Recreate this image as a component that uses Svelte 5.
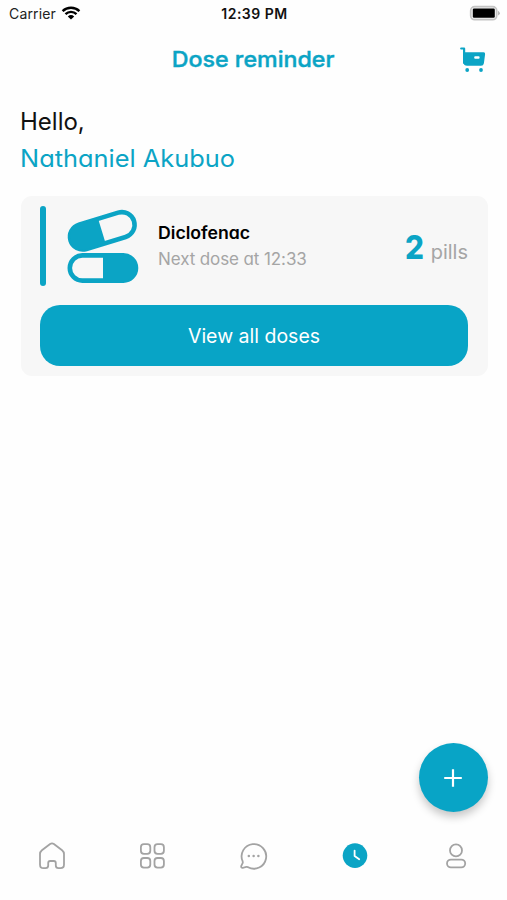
<script>
  const tabs = ['home', 'apps', 'chat', 'doses', 'profile'];
</script>

<div class="screen">
  <div class="status">
    <div class="carrier">
      <span>Carrier</span>
      <svg width="20" height="14" viewBox="0 0 20 14">
        <path d="M1.6 5.2a12 12 0 0 1 16.8 0M4.5 8.1a7.9 7.9 0 0 1 11 0" fill="none" stroke="#000" stroke-width="2.4" />
        <path d="M6.8 10.4a4.7 4.7 0 0 1 6.4 0L10 13.6z" fill="#000" />
      </svg>
    </div>
    <div class="time">12:39 PM</div>
    <svg class="battery" width="32" height="16" viewBox="0 0 32 16">
      <rect x="1.7" y="1.7" width="26" height="13" rx="4" fill="#f4f4f4" stroke="#c4c4c4" stroke-width="1.7" />
      <rect x="3.8" y="3.6" width="22" height="9.2" rx="1.2" fill="#000" />
      <path d="M29.2 5.8q3 2.4 0 4.8z" fill="#aaa" />
    </svg>
  </div>

  <header>
    <h1>Dose reminder</h1>
    <svg class="cart" width="28" height="28" viewBox="0 0 28 28">
      <path d="M2.2 2.5H5.1V17" fill="none" stroke="#0ba4c5" stroke-width="2.2" stroke-linecap="round" stroke-linejoin="round" />
      <path d="M4.6 6.3H24.6Q26.4 6.3 26.1 8.2L24.9 17.2Q24.5 19.8 22 19.8H8.1Q4.6 19.8 4.6 16.5z" fill="#0ba4c5" />
      <rect x="15.2" y="10.3" width="5.4" height="2.4" rx="1" fill="#fff" />
      <circle cx="8.2" cy="24" r="1.9" fill="#0ba4c5" />
      <circle cx="22" cy="24" r="1.9" fill="#0ba4c5" />
    </svg>
  </header>

  <section class="greeting">
    <div class="hello">Hello,</div>
    <div class="name">Nathaniel Akubuo</div>
  </section>

  <section class="card">
    <div class="dose">
      <div class="bar"></div>
      <svg class="pills" width="74" height="78" viewBox="0 0 74 78">
        <g transform="translate(36.3 23.8) rotate(-17)">
          <rect x="-33.2" y="-12.7" width="66.4" height="25.4" rx="12.7" fill="#f7f7f7" stroke="#0ba4c5" stroke-width="4.6" />
          <path d="M-.5-12.7V12.7H-20.5A12.7 12.7 0 0 1-20.5-12.7z" fill="#0ba4c5" />
        </g>
        <rect x="3.8" y="48.4" width="66.2" height="25.2" rx="12.6" fill="#f7f7f7" stroke="#0ba4c5" stroke-width="4.6" />
        <path d="M37 48.4V73.6H57.5A12.6 12.6 0 0 0 57.5 48.4z" fill="#0ba4c5" />
      </svg>
      <div class="info">
        <div class="drug">Diclofenac</div>
        <div class="next">Next dose at 12:33</div>
      </div>
      <div class="count"><b>2</b><span>pills</span></div>
    </div>
    <button class="all">View all doses</button>
  </section>

  <div class="fab-row">
    <button class="fab" aria-label="Add dose">
      <svg width="20" height="20" viewBox="0 0 20 20"><path d="M10 1.2V18.8M1.2 10H18.8" stroke="#fff" stroke-width="2.2" /></svg>
    </button>
  </div>

  <nav>
    {#each tabs as tab}
      <div class="tab">
        <svg width="30" height="30" viewBox="0 0 30 30" fill="none" stroke="#a3a3a3" stroke-width="1.8" stroke-linejoin="round">
          {#if tab === 'home'}
            <path d="M13.1 3Q15 1.7 16.9 3L25.1 9.2Q27 10.7 27 13V23.5Q27 27.2 23.5 27.2H21.5Q18.8 27.2 18.8 24.5V22Q18.8 20 16.8 20H13.2Q11.2 20 11.2 22V24.5Q11.2 27.2 8.5 27.2H6.5Q3 27.2 3 23.5V13Q3 10.7 4.9 9.2z" />
          {:else if tab === 'apps'}
            <rect x="2.9" y="3.2" width="9.4" height="9.6" rx="3" />
            <rect x="16.5" y="3.2" width="9.4" height="9.6" rx="3" />
            <rect x="2.9" y="17" width="9.4" height="9.6" rx="3" />
            <rect x="16.5" y="17" width="9.4" height="9.6" rx="3" />
          {:else if tab === 'chat'}
            <path d="M3.6 20.2A12.3 12.3 0 1 1 9.1 26.2Q7.3 25.6 5.4 26.3L3.7 26.8Q2 27 2.2 25.2L3.4 22.5Q4.1 21.5 3.6 20.2z" />
            <g fill="#a3a3a3" stroke="none">
              <circle cx="9.8" cy="15" r="1.25" /><circle cx="14.6" cy="15" r="1.25" /><circle cx="19.4" cy="15" r="1.25" />
            </g>
          {:else if tab === 'doses'}
            <circle cx="15" cy="14.6" r="12.3" fill="#0ba4c5" stroke="none" />
            <path d="M14.6 9.6V15L19.2 18.2" stroke="#fff" stroke-width="1.8" stroke-linecap="round" />
          {:else}
            <circle cx="15" cy="9.4" r="6" />
            <rect x="6" y="18.6" width="18.2" height="7.8" rx="3.9" />
          {/if}
        </svg>
      </div>
    {/each}
  </nav>
</div>

<style>
  :global(body) { background: #fff; }
  .screen {
    width: 507px; height: 900px; box-sizing: border-box; overflow: hidden;
    display: flex; flex-direction: column; background: #fefefe; color: #111;
    font-family: Inter, "Liberation Sans", sans-serif;
    font-feature-settings: "cv11";
  }
  .status {
    height: 28px; flex: none; display: grid; grid-template-columns: 1fr auto 1fr;
    align-items: center; padding: 0 6px 0 9px; font-feature-settings: normal;
  }
  .carrier { display: flex; align-items: center; gap: 5px; font-size: 14px; color: #222; letter-spacing: .15px; margin-top: -1px; }
  .carrier svg { margin-top: -2px; }
  .time { font-size: 14px; font-weight: 600; letter-spacing: .5px; padding-right: 1px; margin-top: -1px; }
  .battery { justify-self: end; margin-top: -2px; }
  header { height: 64px; flex: none; display: grid; grid-template-columns: 1fr auto 1fr; align-items: center; }
  h1 {
    grid-column: 2; margin: -2px 0 0; font-size: 22px; font-weight: 500; color: #0ba4c5;
    transform: scaleX(1.055); white-space: nowrap; -webkit-text-stroke: .4px #0ba4c5;
  }
  .cart { justify-self: end; margin-right: 20px; }
  .greeting { box-sizing: border-box; height: 104px; flex: none; padding: 12px 20px 0; font-size: 24px; line-height: 36.5px; white-space: nowrap; }
  .name { color: #0ba4c5; transform: scaleX(1.058); transform-origin: left; }
  .card { width: 467px; height: 180px; flex: none; box-sizing: border-box; margin-left: 21px; padding: 10px 20px 10px 19px; border-radius: 11px; background: #f7f7f7; }
  .dose { height: 80px; display: flex; align-items: center; }
  .bar { width: 6px; height: 80px; border-radius: 3px; background: #0ba4c5; }
  .pills { margin-left: 20px; flex: none; }
  .info { margin-left: 18px; white-space: nowrap; line-height: 26px; }
  .drug { font-size: 17px; font-weight: 600; color: #000; transform: scaleX(1.04); transform-origin: left; }
  .next { font-size: 17px; letter-spacing: -.1px; color: #a5a5a5; }
  .count { margin-left: auto; display: flex; align-items: baseline; gap: 7px; color: #a5a5a5; font-size: 20px; padding-top: 2px; }
  .count b { font-size: 33px; font-weight: 800; line-height: 40px; color: #0ba4c5; transform: scaleX(.9); transform-origin: right; }
  button { border: 0; padding: 0; font: inherit; color: #fff; background: #08a4c6; }
  .all { display: block; width: 428px; height: 61px; margin-top: 19px; border-radius: 20px; font-size: 19.5px; font-feature-settings: normal; letter-spacing: 0; }
  .fab-row { flex: 1; display: flex; justify-content: flex-end; align-items: flex-end; padding: 0 19.5px 0 0; }
  .fab { width: 69px; height: 69px; border-radius: 50%; display: flex; align-items: center; justify-content: center; box-shadow: 0 5px 8px rgba(0, 0, 0, .22); }
  nav { height: 73px; flex: none; margin-top: 15px; padding: 14px 0 0 1.5px; box-sizing: border-box; display: flex; width: 507px; }
  .tab { width: 101.1px; display: flex; justify-content: center; align-items: center; height: 30px; }
</style>
